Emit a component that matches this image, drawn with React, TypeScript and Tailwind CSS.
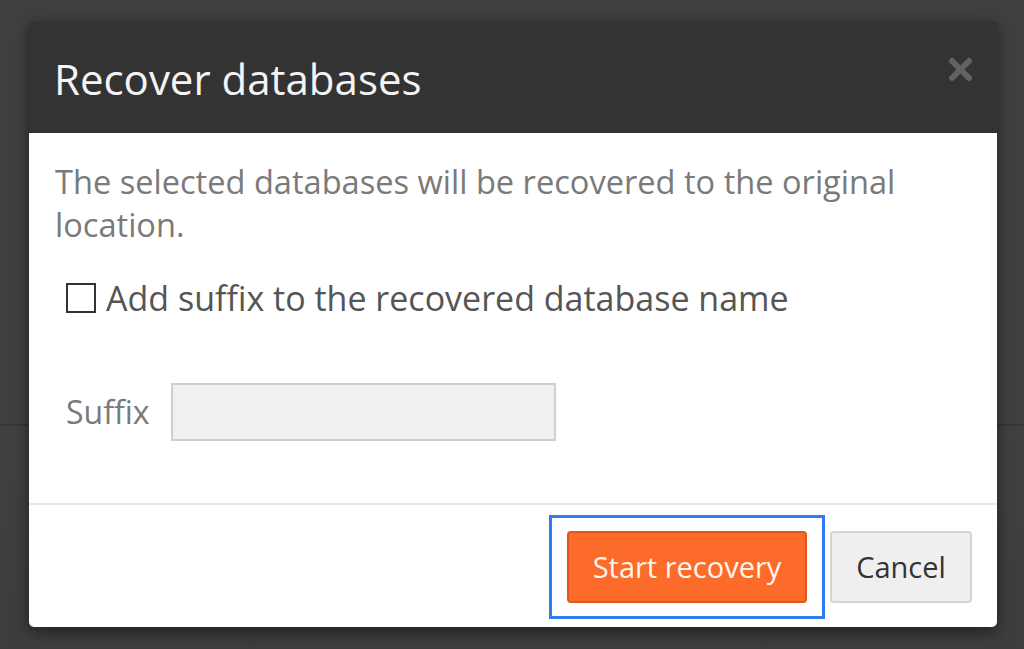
import { useState } from "react";

export default function App() {
  const [addSuffix, setAddSuffix] = useState(false);
  const [suffix, setSuffix] = useState("");

  return (
    <div
      className="flex h-[649px] w-[1024px] flex-col overflow-hidden bg-[#414141] bg-[linear-gradient(to_bottom,#404040_0,#404040_424px,#363636_424px,#363636_426px,#414141_426px,#3d3d3d_100%)] pl-[29px] pt-[22px]"
      style={{ fontFamily: '"Open Sans", "Noto Sans", sans-serif' }}
    >
      <div className="flex h-[605px] w-[968px] flex-col overflow-hidden rounded-b-[5px] bg-white shadow-[0_4px_16px_rgba(0,0,0,0.5)]">
        {/* header */}
        <div className="flex h-[111px] shrink-0 items-center justify-between bg-[#333333] pl-[25px] pr-[24px] pt-[2px]">
          <h1 className="text-[42px] font-normal leading-none text-[#f4f4f4]">
            Recover databases
          </h1>
          <button type="button" className="-mt-[19px] text-[#626262]" aria-label="Close">
            <svg width="25" height="25" viewBox="0 0 25 25">
              <path
                d="M4 4 L21 21 M21 4 L4 21"
                stroke="currentColor"
                strokeWidth="6"
                strokeLinecap="round"
              />
            </svg>
          </button>
        </div>

        {/* body */}
        <div className="flex flex-1 flex-col border-b-2 border-[#e8e8e8] pl-[26px] pr-[60px] pt-[27px]">
          <p className="text-[32.6px] leading-[43px] text-[#7a7a7a]">
            The selected databases will be recovered to the original location.
          </p>

          <label className="mt-[34px] flex items-center gap-[10px] pl-[11px] text-[34px] leading-[36px] text-[#555555]">
            <input
              type="checkbox"
              checked={addSuffix}
              onChange={(e) => setAddSuffix(e.target.checked)}
              className="h-[30px] w-[30px] shrink-0 appearance-none border-2 border-[#333333] bg-white"
            />
            Add suffix to the recovered database name
          </label>

          <div className="mt-[67px] flex items-center gap-[21px] pl-[11px]">
            <span className="text-[32px] leading-none text-[#7a7a7a]">Suffix</span>
            <input
              type="text"
              value={suffix}
              disabled={!addSuffix}
              onChange={(e) => setSuffix(e.target.value)}
              className="h-[58px] w-[385px] border-2 border-[#cfcfcf] bg-[#f0f0f0] px-3 text-[26px]"
            />
          </div>
        </div>

        {/* footer */}
        <div className="flex h-[122px] shrink-0 items-center justify-end gap-[23px] pr-[25px] pt-[1px]">
          <button
            type="button"
            className="relative h-[72px] w-[240px] rounded-[4px] border-2 border-[#e2561c] bg-[#fd6b2b] text-[29px] text-[#fff4ea]"
          >
            <span className="pointer-events-none absolute -inset-x-[20px] -inset-y-[18px] border-[3px] border-[#2f7cf4]" />
            Start recovery
          </button>
          <button
            type="button"
            className="h-[72px] w-[142px] rounded-[4px] border-2 border-[#d4d4d4] bg-[#efefef] text-[29px] text-[#333333]"
          >
            Cancel
          </button>
        </div>
      </div>
    </div>
  );
}
